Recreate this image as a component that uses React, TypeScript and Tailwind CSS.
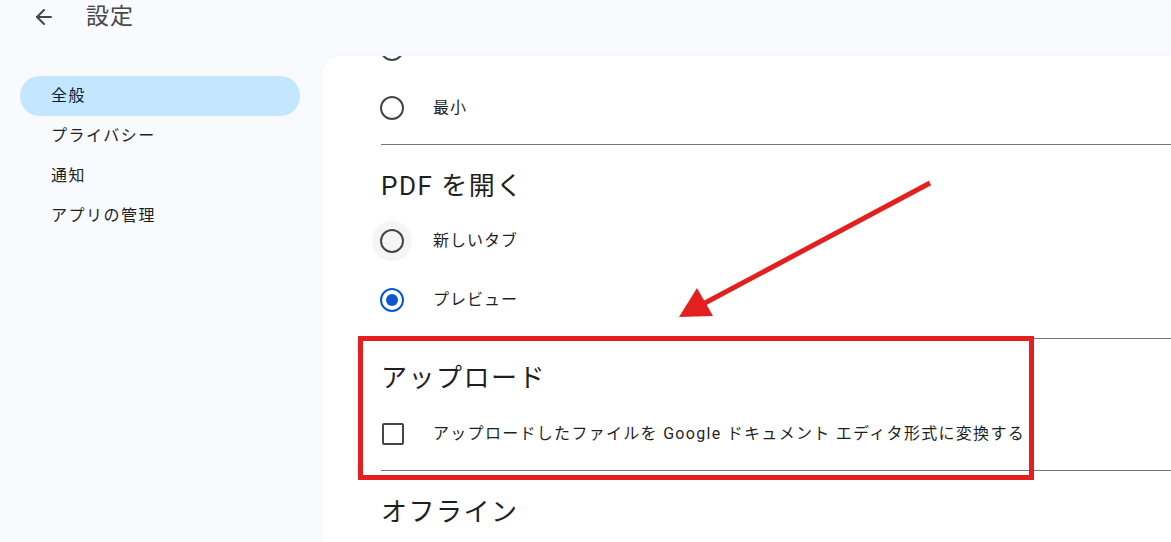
import { ArrowLeft } from 'lucide-react';

const FONT = 'font-[Roboto,"Noto_Sans_CJK_JP",sans-serif]';

const NAV = ['全般', 'プライバシー', '通知', 'アプリの管理'];

function Radio({ checked = false, halo = false }: { checked?: boolean; halo?: boolean }) {
  return (
    <span className="relative flex h-[24px] w-[24px] items-center justify-center">
      {halo && <span className="absolute -inset-[8px] rounded-full bg-[#f5f5f5]" />}
      <span
        className={
          'relative flex h-[24px] w-[24px] items-center justify-center rounded-full border-2 ' +
          (checked ? 'border-[#0b57d0]' : 'border-[#444746]')
        }
      >
        {checked && <span className="h-[12px] w-[12px] rounded-full bg-[#0b57d0]" />}
      </span>
    </span>
  );
}

function RadioRow({ label, checked, halo }: { label?: string; checked?: boolean; halo?: boolean }) {
  return (
    <div className="flex h-[59px] items-center">
      <Radio checked={checked} halo={halo} />
      {label && <span className="ml-[29px] text-[16px] tracking-[1px] text-[#1f1f1f]">{label}</span>}
    </div>
  );
}

function Heading({ children, top, bottom }: { children: string; top: string; bottom: string }) {
  return (
    <h2 className={`${top} ${bottom} ml-px text-[26px] leading-[28px] tracking-[1.5px] text-[#1f1f1f]`}>
      {children}
    </h2>
  );
}

export default function App() {
  return (
    <div className={`relative flex h-[542px] w-[1171px] flex-col overflow-hidden bg-[#f8fafd] ${FONT}`}>
      <header className="flex h-[34px] items-center pl-[32px]">
        <ArrowLeft className="h-[24px] w-[24px] text-[#444746]" strokeWidth={2} />
        <span className="ml-[30px] text-[23px] tracking-[1px] text-[#474747]">設定</span>
      </header>

      <div className="flex flex-1">
        <nav className="flex w-[322px] shrink-0 flex-col pl-[20px] pt-[42px]">
          {NAV.map((item, i) => (
            <div
              key={item}
              className={
                'flex h-[40px] w-[280px] items-center rounded-full pl-[31px] text-[16px] tracking-[1.5px] ' +
                (i === 0 ? 'bg-[#c2e7ff] text-[#001d35]' : 'text-[#1f1f1f]')
              }
            >
              {item}
            </div>
          ))}
        </nav>

        <main className="mt-[22px] flex-1 overflow-hidden rounded-tl-[18px] bg-white pl-[58px] shadow-[-1px_0_2px_rgba(0,0,0,0.03)]">
          {/* list is scrolled: only the bottom of the previous option peeks out */}
          <div className="-mt-[37px] flex flex-col">
            <RadioRow />
            <RadioRow label="最小" />
            <div className="ml-px mt-[7px] h-px bg-[#747775]" />

            <Heading top="pt-[27px]" bottom="pb-[11px]">PDF を開く</Heading>
            <RadioRow label="新しいタブ" halo />
            <RadioRow label="プレビュー" checked />
            <div className="ml-px mt-[9px] h-px bg-[#747775]" />

            <Heading top="pt-[25px]" bottom="pb-[18px]">アップロード</Heading>
            <div className="flex h-[48px] items-center">
              <span className="ml-[2px] h-[22px] w-[22px] rounded-[2px] border-2 border-[#444746]" />
              <span className="ml-[29px] text-[16px] tracking-[1.3px] text-[#1f1f1f]">
                アップロードしたファイルを Google ドキュメント エディタ形式に変換する
              </span>
            </div>
            <div className="ml-px mt-[12px] h-px bg-[#747775]" />

            <Heading top="pt-[27px]" bottom="pb-[20px]">オフライン</Heading>
          </div>
        </main>
      </div>

      {/* callout frame around the upload section */}
      <div className="pointer-events-none absolute left-[358px] top-[336px] h-[144px] w-[676px] border-[5px] border-[#e3201f]" />

      {/* callout arrow */}
      <svg className="pointer-events-none absolute left-0 top-0" width="1171" height="542" viewBox="0 0 1171 542">
        <line x1="930" y1="183" x2="703" y2="304" stroke="#e3201f" strokeWidth="5" />
        <polygon points="679,317 697,288 713,316" fill="#e3201f" />
      </svg>
    </div>
  );
}
